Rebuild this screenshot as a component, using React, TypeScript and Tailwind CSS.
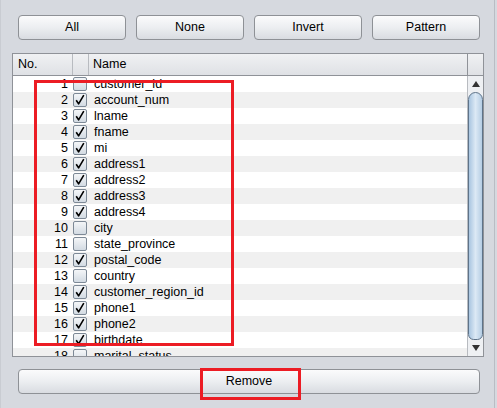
import React from "react";

const rows: [number, boolean, string][] = [
  [1, false, "customer_id"],
  [2, true, "account_num"],
  [3, true, "lname"],
  [4, true, "fname"],
  [5, true, "mi"],
  [6, true, "address1"],
  [7, true, "address2"],
  [8, true, "address3"],
  [9, true, "address4"],
  [10, false, "city"],
  [11, false, "state_province"],
  [12, true, "postal_code"],
  [13, false, "country"],
  [14, true, "customer_region_id"],
  [15, true, "phone1"],
  [16, true, "phone2"],
  [17, true, "birthdate"],
  [18, false, "marital_status"],
];

function Btn({ label, className = "" }: { label: string; className?: string }) {
  return (
    <div
      className={`flex h-[25px] items-center justify-center rounded-[4px] border border-[#8e9196] bg-gradient-to-b from-[#fbfbfc] via-[#eceef1] to-[#d9dce1] text-[12.5px] text-black ${className}`}
    >
      {label}
    </div>
  );
}

function Check({ on }: { on: boolean }) {
  return (
    <div className="flex h-[14px] w-[14px] items-center justify-center rounded-[2px] border border-[#7d8996] bg-gradient-to-b from-[#f4f6f8] to-[#d3dbe3]">
      {on && (
        <svg width="12" height="12" viewBox="0 0 12 12">
          <path d="M2.2 6.2 L4.6 9.8 L9.8 1.2" fill="none" stroke="#000" strokeWidth="1.6" strokeLinejoin="round" />
        </svg>
      )}
    </div>
  );
}

export default function App() {
  return (
    <div
      className="relative flex h-[408px] w-[497px] overflow-hidden bg-[#d6d9df] text-black"
      style={{ fontFamily: '"Liberation Sans", Arial, sans-serif' }}
    >
      <div className="flex w-[494px] flex-col border-l border-[#c9ccd2]">
        <div className="mt-[15px] flex gap-[10px] pl-[17px]">
          <Btn label="All" className="w-[108px]" />
          <Btn label="None" className="w-[108px]" />
          <Btn label="Invert" className="w-[108px]" />
          <Btn label="Pattern" className="w-[108px]" />
        </div>

        <div className="ml-[11px] mt-[13px] flex h-[304px] w-[472px] flex-col border border-[#8f9298] bg-white">
          <div className="flex h-[22px] border-b border-[#8f9298] bg-gradient-to-b from-[#f0f1f3] to-[#dfe1e5] text-[12.5px]">
            <div className="flex w-[60px] items-center border-r border-[#b8bbc0] pl-[5px]">No.</div>
            <div className="w-[16px] border-r border-[#b8bbc0]" />
            <div className="flex flex-1 items-center pl-[4px]">Name</div>
            <div className="w-[16px] border-l border-[#8f9298]" />
          </div>
          <div className="flex min-h-0 flex-1">
            <div className="min-w-0 flex-1 overflow-hidden">
              {rows.map(([n, on, name]) => (
                <div
                  key={n}
                  className={`flex h-[16px] items-center text-[12.5px] leading-none ${n % 2 === 0 ? "bg-[#f0f0f0]" : "bg-white"}`}
                >
                  <div className="w-[55px] text-right">{n}</div>
                  <div className="flex w-[21px] justify-center pl-[2px]">
                    <Check on={on} />
                  </div>
                  <div className="pl-[5px]">{name}</div>
                </div>
              ))}
            </div>
            <div className="flex w-[16px] flex-col border-l border-[#b8bbc0] bg-[#eef0f3]">
              <div className="flex h-[16px] items-center justify-center">
                <svg width="8" height="6" viewBox="0 0 8 6">
                  <path d="M4 0 L8 6 L0 6 Z" fill="#333" />
                </svg>
              </div>
              <div className="flex-1 rounded-t-[8px] rounded-b-[6px] border border-[#5e7389] bg-gradient-to-r from-[#a9c5e0] via-[#dce9f5] to-[#b5cde4]" />
              <div className="flex h-[16px] items-center justify-center">
                <svg width="8" height="6" viewBox="0 0 8 6">
                  <path d="M0 0 L8 0 L4 6 Z" fill="#333" />
                </svg>
              </div>
            </div>
          </div>
        </div>

        <div className="ml-[17px] mt-[12px]">
          <Btn label="Remove" className="w-[462px] h-[24px]" />
        </div>
      </div>
      <div className="w-[1px] bg-[#b9bdc4]" />
      <div className="flex-1 bg-[#d6d9df]" />

      <div className="pointer-events-none absolute left-[34px] top-[80px] h-[266px] w-[200px] border-[3px] border-[#ec1c24]" />
      <div className="pointer-events-none absolute left-[200px] top-[368px] h-[32px] w-[101px] border-[3px] border-[#ec1c24]" />
    </div>
  );
}
